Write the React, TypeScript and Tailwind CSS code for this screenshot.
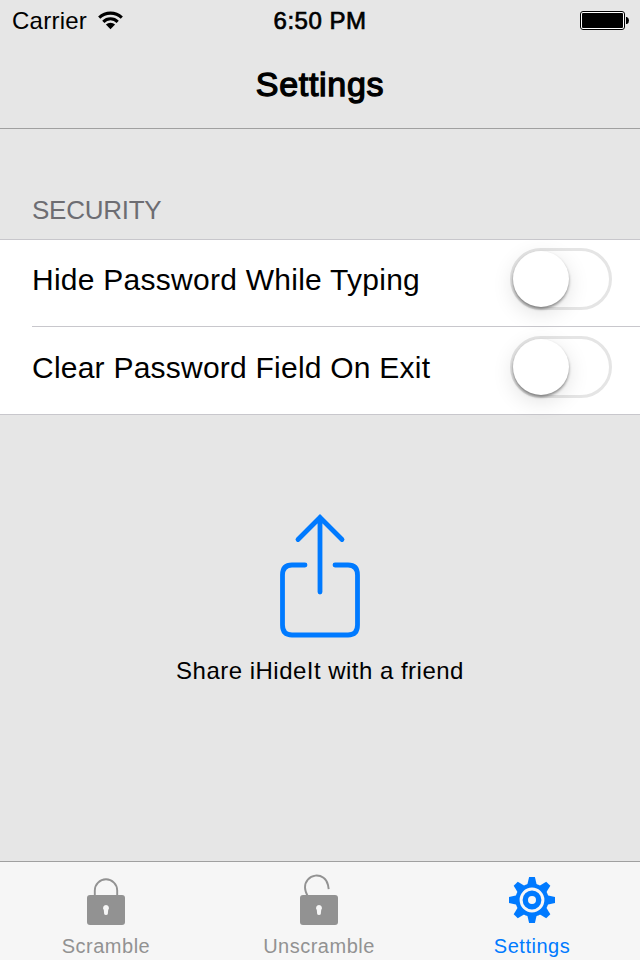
import React from "react";

const BLUE = "#007aff";
const GRAY = "#929292";

function WifiIcon() {
  return (
    <svg width="25" height="20" viewBox="0.5 0 25 20" fill="none" stroke="#000" strokeWidth="3.1">
      <path d="M1.7 7.6A16.500 16.500 0 0 1 24.3 7.6" />
      <path d="M5.8 11.8A10.2 10.2 0 0 1 20.2 11.8" />
      <path d="M13 19.200L8.4 14.600A6.500 6.500 0 0 1 17.6 14.600Z" fill="#000" stroke="none" />
    </svg>
  );
}

function Battery() {
  return (
    <svg width="50" height="20" viewBox="0 0 50 20">
      <rect x="0.5" y="0.5" width="44" height="18" rx="2.5" fill="#fff" stroke="#000" />
      <rect x="2" y="2" width="41" height="15" rx="1" fill="#000" />
      <path d="M46 6h1q2 1 2 3.5t-2 3.5h-1z" fill="#000" />
    </svg>
  );
}

function StatusBar() {
  return (
    <div className="grid h-[40px] grid-cols-3 text-[24px] leading-[41px]">
      <div className="flex pl-[12px]">
        <span className="tracking-[0.25px]">Carrier</span>
        <span className="ml-[11px] mt-[10px]"><WifiIcon /></span>
      </div>
      <div className="text-center tracking-[0.5px] [-webkit-text-stroke:0.7px_#000]">6:50 PM</div>
      <div className="flex justify-end pr-[10px] pt-[11px]"><Battery /></div>
    </div>
  );
}

function SwitchRow({ label, spacing }: { label: string; spacing: string }) {
  return (
    <div className="flex h-[87px] items-start justify-between pr-[28px]">
      <span className={`whitespace-nowrap text-[30px] leading-[80px] ${spacing}`}>{label}</span>
      <button
        role="switch"
        aria-checked="false"
        aria-label={label}
        className="mt-[8px] h-[62px] w-[102px] rounded-full border-[3px] border-[#e5e5e5] bg-white"
      >
        <span className="block size-[56px] rounded-full bg-white shadow-[0_6px_22px_rgba(0,0,0,0.12),0_2px_3px_rgba(0,0,0,0.42)]" />
      </button>
    </div>
  );
}

function ShareIcon() {
  return (
    <svg width="84" height="126" viewBox="278 513 84 126" fill="none" stroke={BLUE} strokeWidth="4.8" strokeLinecap="round">
      <path d="M320 517.5V592M298 539.5L320 517.5L342 539.5" />
      <path d="M305 565H292Q282.500 565 282.500 575V625Q282.500 635 292 635H348Q357.500 635 357.500 625V575Q357.500 565 348 565H335" />
    </svg>
  );
}

function Lock({ open = false }: { open?: boolean }) {
  return (
    <svg className="shrink-0" width="40" height="52" viewBox="0 0 40 52">
      <path
        d={open ? "M8.800 22.500C6.500 18 6 16 6 13.500A11.600 11.600 0 0 1 29 11L29.700 15.200" : "M8.800 22V16.500A11.200 11.200 0 0 1 31.200 16.500V22"}
        fill="none"
        stroke={GRAY}
        strokeWidth="1.9"
      />
      <rect x="1" y="21" width="38" height="30" rx="3" fill={GRAY} />
      <path d="M20 31a3 3 0 0 1 2.200 5l-.4 4q-.2 1-1.800 1t-1.800-1l-.4-4a3 3 0 0 1 2.200-5z" fill="#f6f6f6" />
    </svg>
  );
}

function Gear() {
  return (
    <svg className="shrink-0" width="48" height="48" viewBox="-24 -24 48 48">
      {[0, 45, 90, 135, 180, 225, 270, 315].map((angle) => (
        <path key={angle} d="M-5 -14L-2.900 -23H2.900L5 -14Z" fill={BLUE} transform={`rotate(${angle})`} />
      ))}
      <circle r="14.500" fill="none" stroke={BLUE} strokeWidth="4.200" />
      <circle r="6.700" fill="none" stroke={BLUE} strokeWidth="5.400" />
    </svg>
  );
}

export default function App() {
  return (
    <div className="flex h-[960px] w-[640px] flex-col overflow-hidden bg-[#e6e6e6] font-['Liberation_Sans',Arial,sans-serif] text-black">
      <header className="h-[129px] border-b border-[#a0a0a0]">
        <StatusBar />
        <h1 className="text-center text-[34px] leading-[88px] tracking-[0.7px] [-webkit-text-stroke:1.3px_#000]">Settings</h1>
      </header>
      <main className="flex-1">
        <h2 className="h-[110px] pl-[32px] pt-[61px] text-[26px] leading-[40px] tracking-[-0.25px] text-[#6d6d72]">SECURITY</h2>
        <section className="h-[176px] border-y border-[#c8c7cc] bg-white pl-[32px]">
          <SwitchRow label="Hide Password While Typing" spacing="tracking-[0.26px]" />
          <div className="-mt-px h-px bg-[#c8c7cc]" />
          <div className="pt-px">
            <SwitchRow label="Clear Password Field On Exit" spacing="tracking-[0.23px]" />
          </div>
        </section>
        <button className="mx-auto mt-[98px] flex w-[320px] flex-col items-center">
          <ShareIcon />
          <span className="mt-[12px] whitespace-nowrap text-[24px] leading-[40px] tracking-[0.48px]">Share iHideIt with a friend</span>
        </button>
      </main>
      <nav className="flex h-[99px] justify-between border-t border-[#a0a0a0] bg-[#f6f6f6] px-[36px] text-[20px] text-[#929292]">
        <a className="flex w-[140px] flex-col items-center pt-[12px]">
          <Lock />
          <span className="leading-[40px] tracking-[0.5px]">Scramble</span>
        </a>
        <a className="flex w-[144px] flex-col items-center pl-[2px] pt-[12px]">
          <Lock open />
          <span className="leading-[40px] tracking-[0.5px]">Unscramble</span>
        </a>
        <a className="flex w-[144px] flex-col items-center pt-[14px] text-[#007aff]">
          <Gear />
          <span className="mt-[2px] leading-[40px] tracking-[0.5px]">Settings</span>
        </a>
      </nav>
    </div>
  );
}
